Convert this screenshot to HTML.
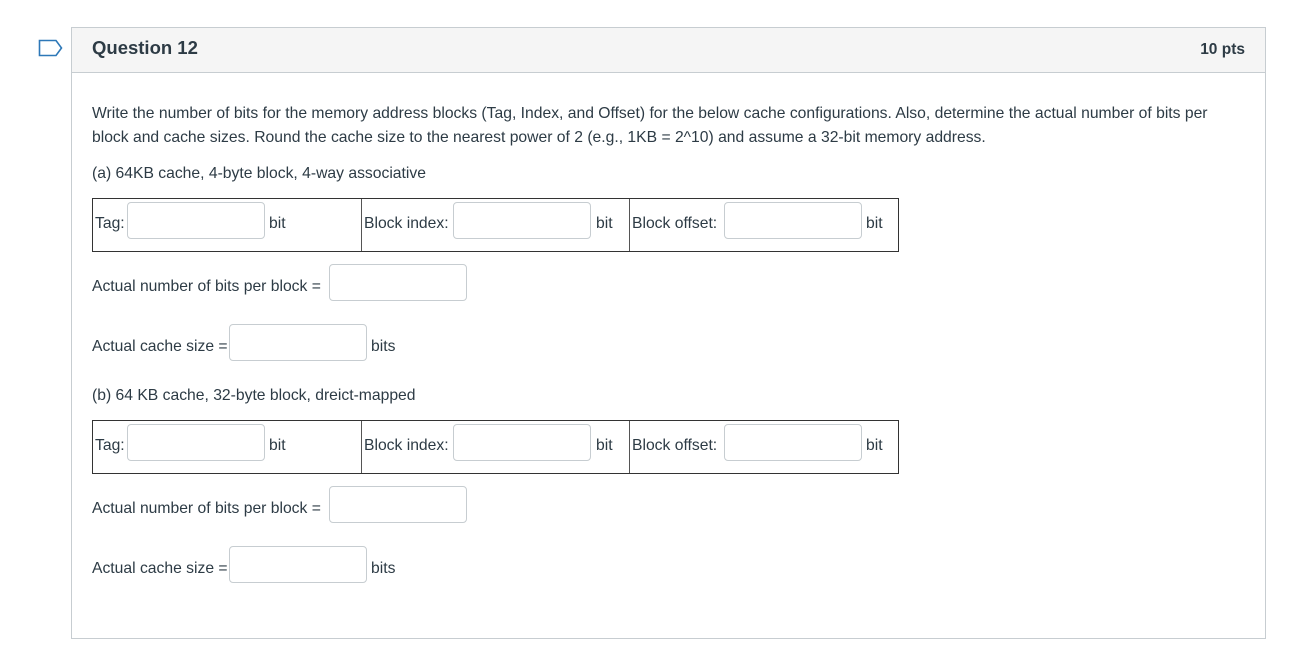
<!DOCTYPE html>
<html><head><style>
body{margin:0;width:1305px;height:669px;background:#fff;font-family:"Liberation Sans",sans-serif;color:#2d3b45;position:relative;overflow:hidden}
.a{position:absolute;white-space:nowrap}
.t{font-size:15.7px;line-height:20px}
.inp{position:absolute;border:1px solid #c7cdd1;border-radius:4px;background:#fff;box-sizing:border-box;height:37px;width:138px}
.tbl{position:absolute;left:92px;width:807px;height:54px;border:1px solid #333;box-sizing:border-box}
.dv{position:absolute;top:0;bottom:0;width:1px;background:#555}
</style></head><body>
<svg class="a" style="left:38px;top:39px" width="26" height="19"><path d="M1.5 1.5 H18 L23.5 9 L18 16.5 H1.5 Z" fill="none" stroke="#2d78b8" stroke-width="1.6"/></svg>
<div class="a" style="left:71px;top:27px;width:1195px;height:612px;border:1px solid #c7cdd1;box-sizing:border-box"></div>
<div class="a" style="left:72px;top:28px;width:1193px;height:44px;background:#f5f5f5;border-bottom:1px solid #c7cdd1"></div>
<div class="a" style="left:92px;top:37px;font-size:18.5px;font-weight:bold;line-height:22px">Question 12</div>
<div class="a" style="right:60px;top:40px;font-size:15.5px;font-weight:bold;line-height:20px">10 pts</div>
<div class="a t" style="left:92px;top:104px">Write the number of bits for the memory address blocks (Tag, Index, and Offset) for the below cache configurations. Also, determine the actual number of bits per</div>
<div class="a t" style="left:92px;top:128px">block and cache sizes. Round the cache size to the nearest power of 2 (e.g., 1KB = 2^10) and assume a 32-bit memory address.</div>
<div class="a t" style="left:92px;top:164px">(a) 64KB cache, 4-byte block, 4-way associative</div>

<div class="tbl" style="top:198px"><div class="dv" style="left:268px"></div><div class="dv" style="left:536px"></div></div>
<div class="a t" style="left:95px;top:214px">Tag:</div><div class="inp" style="left:127px;top:202px"></div><div class="a t" style="left:269px;top:214px">bit</div>
<div class="a t" style="left:364px;top:214px">Block index:</div><div class="inp" style="left:453px;top:202px"></div><div class="a t" style="left:596px;top:214px">bit</div>
<div class="a t" style="left:632px;top:214px">Block offset:</div><div class="inp" style="left:724px;top:202px"></div><div class="a t" style="left:866px;top:214px">bit</div>

<div class="a t" style="left:92px;top:277px">Actual number of bits per block =</div><div class="inp" style="left:329px;top:264px"></div>
<div class="a t" style="left:92px;top:337px">Actual cache size =</div><div class="inp" style="left:229px;top:324px"></div><div class="a t" style="left:371px;top:337px">bits</div>

<div class="a t" style="left:92px;top:386px">(b) 64 KB cache, 32-byte block, dreict-mapped</div>
<div class="tbl" style="top:420px"><div class="dv" style="left:268px"></div><div class="dv" style="left:536px"></div></div>
<div class="a t" style="left:95px;top:436px">Tag:</div><div class="inp" style="left:127px;top:424px"></div><div class="a t" style="left:269px;top:436px">bit</div>
<div class="a t" style="left:364px;top:436px">Block index:</div><div class="inp" style="left:453px;top:424px"></div><div class="a t" style="left:596px;top:436px">bit</div>
<div class="a t" style="left:632px;top:436px">Block offset:</div><div class="inp" style="left:724px;top:424px"></div><div class="a t" style="left:866px;top:436px">bit</div>

<div class="a t" style="left:92px;top:499px">Actual number of bits per block =</div><div class="inp" style="left:329px;top:486px"></div>
<div class="a t" style="left:92px;top:559px">Actual cache size =</div><div class="inp" style="left:229px;top:546px"></div><div class="a t" style="left:371px;top:559px">bits</div>
</body></html>
